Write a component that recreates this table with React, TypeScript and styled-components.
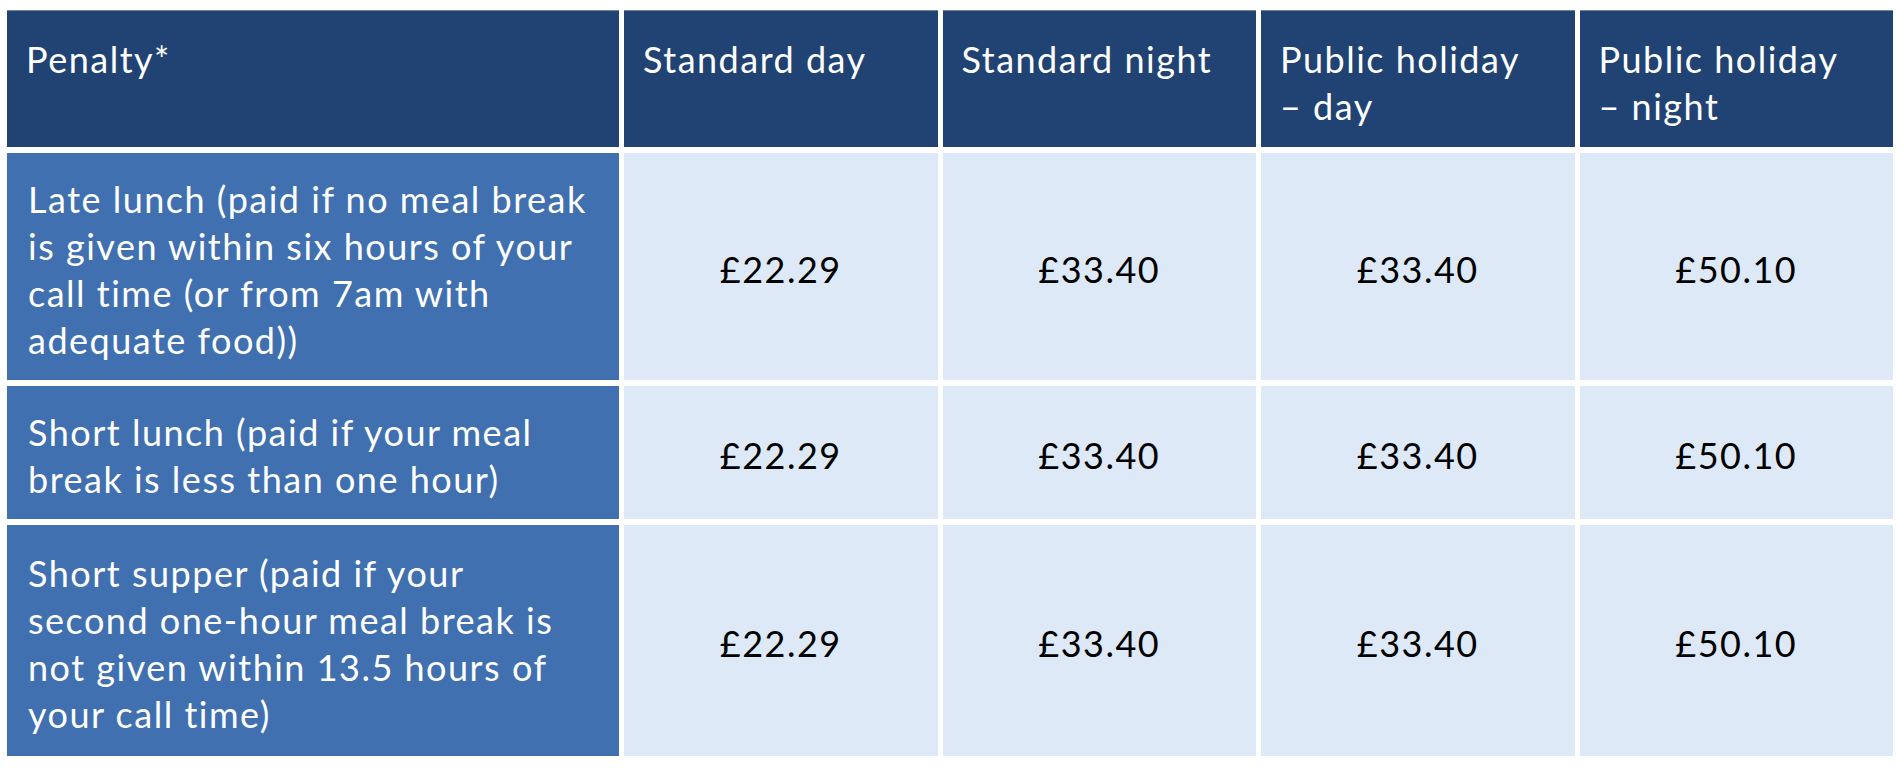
import React from "react";
import styled, { createGlobalStyle } from "styled-components";

const GlobalStyle = createGlobalStyle`
  html, body {
    margin: 0;
    padding: 0;
    background: #ffffff;
  }
  body {
    font-family: Lato, "Open Sans", "Liberation Sans", sans-serif;
  }
`;

const Page = styled.div`
  padding: 10px 11px 0 7px;
  background: #ffffff;
`;

const Table = styled.div`
  display: grid;
  grid-template-columns: 612px repeat(4, 1fr);
  grid-template-rows: 137px 227px 133px 231px;
  column-gap: 5px;
  row-gap: 6px;
  font-family: Lato, "Open Sans", "Liberation Sans", sans-serif;
  font-size: 36px;
  line-height: 47px;
  letter-spacing: 1.5px;
`;

const HeadCell = styled.div`
  background: #214373;
  color: #ffffff;
  padding: 26px 19px 0 19px;
  white-space: nowrap;
  box-shadow: inset 0 1px 0 #6f83a6;
`;

const LabelCell = styled.div`
  background: #4070b0;
  color: #ffffff;
  padding: 6px 20px 0 21px;
  display: flex;
  align-items: center;
  white-space: nowrap;
`;

const ValueCell = styled.div`
  background: #dde9f7;
  color: #000000;
  padding-top: 6px;
  display: flex;
  align-items: center;
  justify-content: center;
`;

const headers: React.ReactNode[] = [
  "Penalty*",
  "Standard day",
  "Standard night",
  <>
    Public holiday
    <br />– day
  </>,
  <>
    Public holiday
    <br />– night
  </>,
];

const rows: { label: string[]; values: string[] }[] = [
  {
    label: [
      "Late lunch (paid if no meal break",
      "is given within six hours of your",
      "call time (or from 7am with",
      "adequate food))",
    ],
    values: ["£22.29", "£33.40", "£33.40", "£50.10"],
  },
  {
    label: ["Short lunch (paid if your meal", "break is less than one hour)"],
    values: ["£22.29", "£33.40", "£33.40", "£50.10"],
  },
  {
    label: [
      "Short supper (paid if your",
      "second one-hour meal break is",
      "not given within 13.5 hours of",
      "your call time)",
    ],
    values: ["£22.29", "£33.40", "£33.40", "£50.10"],
  },
];

export default function App() {
  return (
    <>
      <GlobalStyle />
      <Page>
        <Table>
          {headers.map((h, i) => (
            <HeadCell key={`h${i}`}>{h}</HeadCell>
          ))}
          {rows.map((r, ri) => (
            <React.Fragment key={`r${ri}`}>
              <LabelCell>
                <div>
                  {r.label.map((line, li) => (
                    <React.Fragment key={li}>
                      {line}
                      {li < r.label.length - 1 && <br />}
                    </React.Fragment>
                  ))}
                </div>
              </LabelCell>
              {r.values.map((v, vi) => (
                <ValueCell key={`v${ri}-${vi}`}>{v}</ValueCell>
              ))}
            </React.Fragment>
          ))}
        </Table>
      </Page>
    </>
  );
}
